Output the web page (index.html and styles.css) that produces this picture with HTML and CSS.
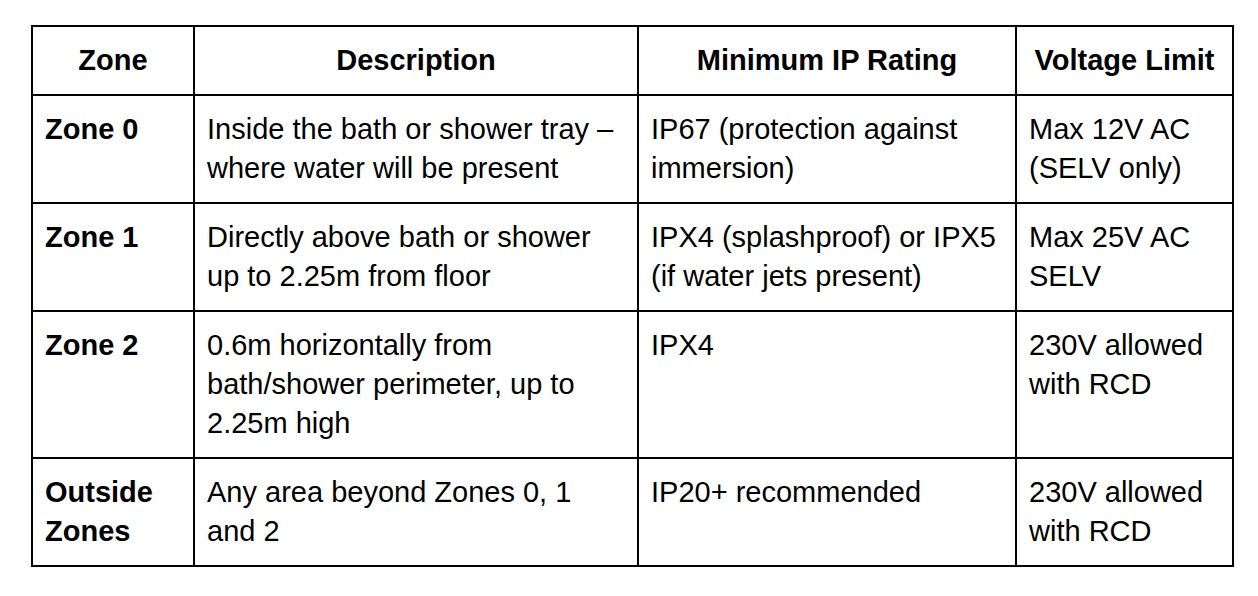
FILE: index.html
```html
<!DOCTYPE html>
<html>
<head>
<meta charset="utf-8">
<link rel="stylesheet" href="styles.css">
</head>
<body>
<div class="page">
<table class="zones">
  <colgroup>
    <col class="c1"><col class="c2"><col class="c3"><col class="c4">
  </colgroup>
  <thead>
    <tr><th>Zone</th><th>Description</th><th>Minimum IP Rating</th><th>Voltage Limit</th></tr>
  </thead>
  <tbody>
    <tr><td class="zone">Zone 0</td><td>Inside the bath or shower tray – where water will be present</td><td>IP67 (protection against immersion)</td><td>Max 12V AC (SELV only)</td></tr>
    <tr><td class="zone">Zone 1</td><td>Directly above bath or shower up to 2.25m from floor</td><td>IPX4 (splashproof) or IPX5 (if water jets present)</td><td>Max 25V AC SELV</td></tr>
    <tr><td class="zone">Zone 2</td><td>0.6m horizontally from bath/shower perimeter, up to 2.25m high</td><td>IPX4</td><td>230V allowed with RCD</td></tr>
    <tr><td class="zone">Outside Zones</td><td>Any area beyond Zones 0, 1 and 2</td><td>IP20+ recommended</td><td>230V allowed with RCD</td></tr>
  </tbody>
</table>
</div>
</body>
</html>
```

FILE: styles.css
```css
html, body {
  margin: 0;
  padding: 0;
  background: #fff;
}
.page {
  padding: 25px 0 0 31px;
}
.zones {
  border-collapse: collapse;
  table-layout: fixed;
  width: 1203px;
  font-family: "Liberation Sans", Arial, Helvetica, sans-serif;
  font-size: 29px;
  line-height: 39px;
  color: #000;
}
.c1 { width: 162px; }
.c2 { width: 444px; }
.c3 { width: 378px; }
.c4 { width: 217px; }
.zones th, .zones td {
  border: 2px solid #000;
  padding: 14px 12px 14px 12px;
  vertical-align: top;
  text-align: left;
}
.zones th {
  font-weight: bold;
  text-align: center;
}
.zones td.zone {
  font-weight: bold;
}
```
